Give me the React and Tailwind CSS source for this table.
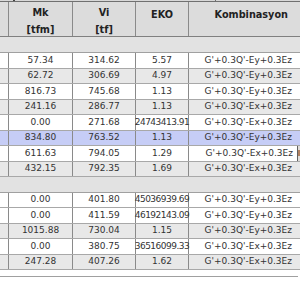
import React from "react";

const W = "bg-white";
const G = "bg-[#e8e8e8]";
const B = "bg-[#c6cdf6]";

const top = [
  ["57.34", "314.62", "5.57", "G'+0.3Q'-Ey+0.3Ez", W],
  ["62.72", "306.69", "4.97", "G'+0.3Q'-Ey+0.3Ez", G],
  ["816.73", "745.68", "1.13", "G'+0.3Q'-Ey+0.3Ez", W],
  ["241.16", "286.77", "1.13", "G'+0.3Q'-Ex+0.3Ez", G],
  ["0.00", "271.68", "24743413.91", "G'+0.3Q'-Ex+0.3Ez", W],
  ["834.80", "763.52", "1.13", "G'+0.3Q'-Ey+0.3Ez", B],
  ["611.63", "794.05", "1.29", "G'+0.3Q'-Ex+0.3Ez", W, true],
  ["432.15", "792.35", "1.69", "G'+0.3Q'-Ex+0.3Ez", G],
];

const bottom = [
  ["0.00", "401.80", "45036939.69", "G'+0.3Q'-Ey+0.3Ez", W],
  ["0.00", "411.59", "46192143.09", "G'+0.3Q'-Ey+0.3Ez", W],
  ["1015.88", "730.04", "1.15", "G'+0.3Q'-Ey+0.3Ez", G],
  ["0.00", "380.75", "36516099.33", "G'+0.3Q'-Ex+0.3Ez", W],
  ["247.28", "407.26", "1.62", "G'+0.3Q'-Ex+0.3Ez", G],
];

function Row({ r }) {
  const [mk, vi, eko, komb, bg, focus] = r;
  const long = eko.length > 6;
  return (
    <div className={`flex h-[15.5px] shrink-0 border-b border-[#a8a8a8] ${bg}`}>
      <div className="w-[9px] shrink-0 border-r border-[#8a8a8a]" />
      <div className="w-[64px] shrink-0 border-r border-[#8a8a8a] flex items-center justify-center">
        {mk}
      </div>
      <div className="w-[63px] shrink-0 border-r border-[#8a8a8a] flex items-center justify-center">
        {vi}
      </div>
      <div className="w-[53px] shrink-0 border-r border-[#8a8a8a] flex items-center justify-center">
        <span className={`relative z-10 whitespace-nowrap ${long ? "tracking-[-0.5px]" : ""}`}>{eko}</span>
      </div>
      {focus ? (
        <div className="flex-1 flex">
          <div className="w-[109px] shrink-0 border-r border-[#606060] flex items-center justify-end pr-[4px] whitespace-nowrap">
            {komb}
          </div>
          <div className="flex-1 bg-[#e0dcd8] flex items-center">
            <div className="w-[2px] h-[6px] bg-[#b08060]" />
          </div>
        </div>
      ) : (
        <div className="flex-1 flex items-center justify-end pr-[8px] whitespace-nowrap">
          {komb}
        </div>
      )}
    </div>
  );
}

function GroupRow({ h }) {
  return <div className={`${h} shrink-0 bg-[#e2e2e2] border-b border-[#a0a0a0]`} />;
}

export default function App() {
  return (
    <div
      className="w-[300px] h-[300px] overflow-hidden bg-white flex flex-col text-[9px] text-[#333333]"
      style={{ fontFamily: '"DejaVu Sans", Verdana, sans-serif' }}
    >
      <div className="h-[2px] shrink-0 bg-[#d8d8d8] border-b border-[#707070] flex">
        <div className="ml-[13px] w-[2px] h-[1px] bg-[#444]" />
        <div className="ml-[200px] w-[1px] h-[1px] bg-[#707070]" />
      </div>
      <div className="h-[35px] shrink-0 flex bg-[#dcdcdc] border-b border-[#808080] font-bold text-[9.7px] text-[#222222] leading-[16.5px]">
        <div className="w-[9px] shrink-0 border-r border-[#8a8a8a]" />
        <div className="w-[64px] shrink-0 border-r border-[#8a8a8a] flex flex-col items-center justify-center pt-[5px]">
          <span>Mk</span>
          <span>[tfm]</span>
        </div>
        <div className="w-[63px] shrink-0 border-r border-[#8a8a8a] flex flex-col items-center justify-center pt-[5px]">
          <span>Vi</span>
          <span>[tf]</span>
        </div>
        <div className="w-[53px] shrink-0 border-r border-[#8a8a8a] flex flex-col items-center justify-start pt-[5px]">
          <span>EKO</span>
        </div>
        <div className="flex-1 flex flex-col items-end justify-start pt-[5px] pr-[12px] whitespace-nowrap">
          <span>Kombinasyon</span>
        </div>
      </div>
      <GroupRow h="h-[16px]" />
      {top.map((r, i) => (
        <Row key={"t" + i} r={r} />
      ))}
      <GroupRow h="h-[15.5px]" />
      {bottom.map((r, i) => (
        <Row key={"b" + i} r={r} />
      ))}
      <div className="h-[6px] shrink-0" />
      <div className="w-[298px] h-px shrink-0 bg-[#a0a0a0]" />
    </div>
  );
}
